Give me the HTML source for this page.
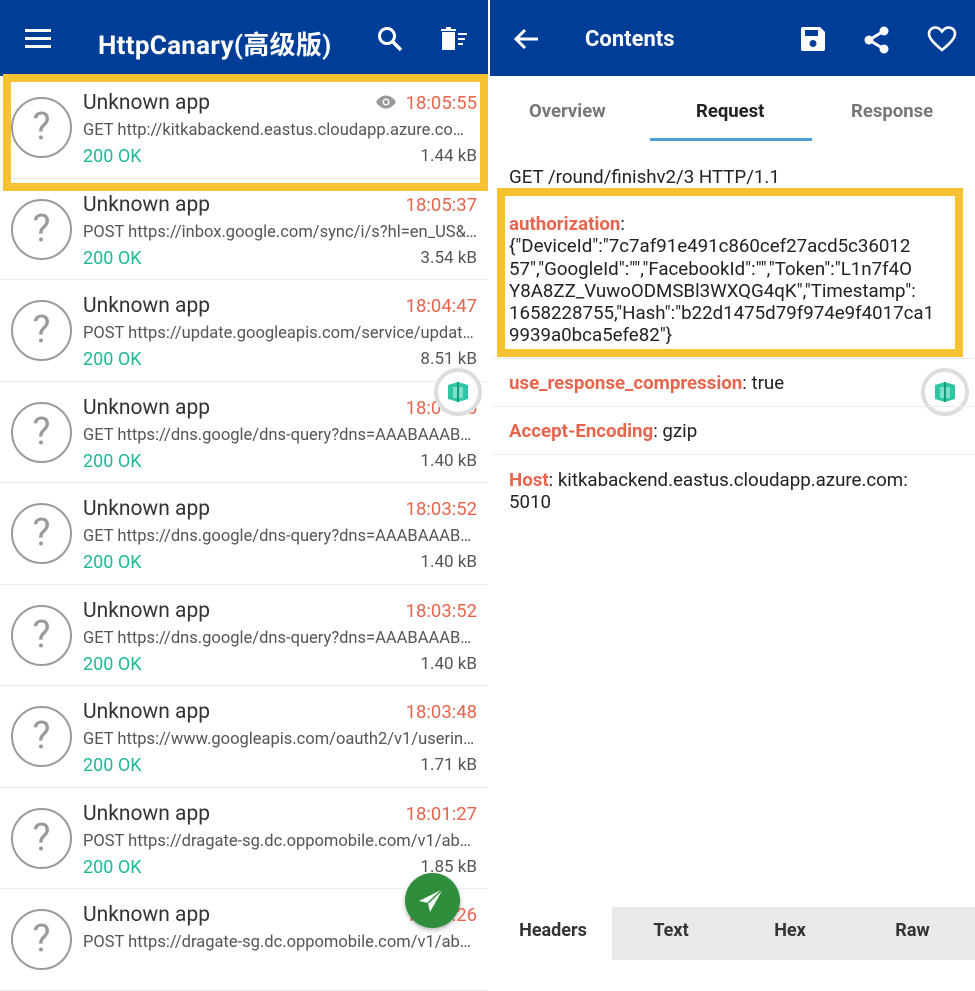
<!DOCTYPE html>
<html><head><meta charset="utf-8"><style>
*{margin:0;padding:0;box-sizing:border-box}
body{width:975px;height:960px;overflow:hidden;background:#fff;font-family:"Roboto","Liberation Sans","Noto Sans CJK SC",sans-serif;position:relative}
.abs{position:absolute}
.bar{position:absolute;top:0;height:76px;background:#003d96}
.row{position:absolute;left:0;width:488px;height:101.5px;border-bottom:1px solid #ececec}
.ic{position:absolute;left:11px;top:20px;width:61px;height:61px;border:2.5px solid #9a9a9a;border-radius:50%;color:#9a9a9a;font-size:38px;text-align:center;line-height:56px}
.nm{position:absolute;left:83px;top:14px;font-size:21px;color:#333}
.url{position:absolute;left:83px;top:44px;font-size:16.5px;color:#555;width:395px;white-space:nowrap;overflow:hidden;text-overflow:ellipsis}
.st{position:absolute;left:83px;top:69px;font-size:18px;color:#1fb898}
.tm{position:absolute;right:11px;top:15px;font-size:18.5px;color:#e8654d}
.sz{position:absolute;right:11px;top:69px;font-size:17px;color:#555}
.k{color:#e8654d;font-weight:bold}
.hd{position:absolute;left:509px;font-size:18.7px;color:#222;line-height:22.3px}
.sep{position:absolute;left:494px;right:0;height:1px;background:#ececec}
.tab{position:absolute;top:907px;height:53px;font-size:18px;font-weight:bold;color:#333;text-align:center;line-height:48px;background:#e9e9e9}
.float{position:absolute;width:48px;height:48px;border-radius:50%;background:#fff;border:4px solid #ddd}
</style></head><body>
<div class="bar" style="left:0;width:488px"></div>
<div class="bar" style="left:490px;width:485px"></div>
<div class="abs" style="left:25px;top:29px;width:26px;height:3px;background:#fff;box-shadow:0 8px 0 #fff,0 16px 0 #fff"></div>
<div class="abs" style="left:98px;top:25px;color:#fff;font-size:26px;font-weight:bold;letter-spacing:0.3px">HttpCanary(高级版)</div>
<svg class="abs" style="left:376px;top:25px" width="28" height="28" viewBox="0 0 28 28"><circle cx="11" cy="11" r="7.5" fill="none" stroke="#fff" stroke-width="3"/><path d="M16.5 16.5L25 25" stroke="#fff" stroke-width="3.5"/></svg>
<svg class="abs" style="left:440px;top:27px" width="30" height="24" viewBox="0 0 30 24"><rect x="2" y="5" width="13" height="18" fill="#fff"/><rect x="1" y="2" width="15" height="2" fill="#fff"/><rect x="6" y="0" width="5" height="2" fill="#fff"/><rect x="18" y="6" width="9" height="2" fill="#fff"/><rect x="18" y="11" width="7" height="2" fill="#fff"/><rect x="18" y="16" width="5" height="2" fill="#fff"/></svg>
<svg class="abs" style="left:512px;top:27px" width="28" height="24" viewBox="0 0 28 24"><path d="M26 12H4M13 3L4 12l9 9" fill="none" stroke="#fff" stroke-width="3"/></svg>
<div class="abs" style="left:585px;top:27px;color:#fff;font-size:22px;font-weight:bold">Contents</div>
<svg class="abs" style="left:799px;top:25px" width="28" height="28" viewBox="0 0 28 28"><path d="M2 4a2 2 0 0 1 2-2h17l5 5v17a2 2 0 0 1-2 2H4a2 2 0 0 1-2-2z" fill="#fff"/><rect x="6" y="5" width="13" height="6" fill="#003d96"/><circle cx="14" cy="18.5" r="3.5" fill="#003d96"/></svg>
<svg class="abs" style="left:862px;top:25px" width="30" height="30" viewBox="0 0 30 30"><path d="M22 6L7 15l15 9" fill="none" stroke="#fff" stroke-width="3"/><circle cx="22" cy="6" r="4.5" fill="#fff"/><circle cx="7" cy="15" r="4.5" fill="#fff"/><circle cx="22" cy="24" r="4.5" fill="#fff"/></svg>
<svg class="abs" style="left:927px;top:25px" width="30" height="28" viewBox="0 0 30 28"><path d="M15 25C4 16 2 12 2 8.5 2 5 5 2.5 8.5 2.5c3 0 5 2 6.5 4 1.5-2 3.5-4 6.5-4C25 2.5 28 5 28 8.5 28 12 26 16 15 25z" fill="none" stroke="#fff" stroke-width="2.6"/></svg>

<div class="row" style="top:77px"><div class="ic">?</div><div class="nm">Unknown app</div>
<svg class="abs" style="left:375px;top:18px" width="22" height="14" viewBox="0 0 22 14"><path d="M1 7C4 2 8 0.5 11 0.5S18 2 21 7c-3 5-7 6.5-10 6.5S4 12 1 7z" fill="#9a9a9a"/><circle cx="11" cy="7" r="3.5" fill="#fff"/><circle cx="11" cy="7" r="2" fill="#9a9a9a"/></svg>
<div class="tm">18:05:55</div><div class="url">GET http://kitkabackend.eastus.cloudapp.azure.com:5010/round</div><div class="st">200 OK</div><div class="sz">1.44 kB</div></div>
<div class="row" style="top:178.5px"><div class="ic">?</div><div class="nm">Unknown app</div><div class="tm">18:05:37</div><div class="url">POST https://inbox.google.com/sync/i/s?hl=en_US&amp;c=0</div><div class="st">200 OK</div><div class="sz">3.54 kB</div></div>
<div class="row" style="top:280px"><div class="ic">?</div><div class="nm">Unknown app</div><div class="tm">18:04:47</div><div class="url">POST https://update.googleapis.com/service/update2</div><div class="st">200 OK</div><div class="sz">8.51 kB</div></div>
<div class="row" style="top:381.5px"><div class="ic">?</div><div class="nm">Unknown app</div><div class="tm">18:04:15</div><div class="url">GET https://dns.google/dns-query?dns=AAABAAABAAAA</div><div class="st">200 OK</div><div class="sz">1.40 kB</div></div>
<div class="row" style="top:483px"><div class="ic">?</div><div class="nm">Unknown app</div><div class="tm">18:03:52</div><div class="url">GET https://dns.google/dns-query?dns=AAABAAABAAAA</div><div class="st">200 OK</div><div class="sz">1.40 kB</div></div>
<div class="row" style="top:584.5px"><div class="ic">?</div><div class="nm">Unknown app</div><div class="tm">18:03:52</div><div class="url">GET https://dns.google/dns-query?dns=AAABAAABAAAA</div><div class="st">200 OK</div><div class="sz">1.40 kB</div></div>
<div class="row" style="top:686px"><div class="ic">?</div><div class="nm">Unknown app</div><div class="tm">18:03:48</div><div class="url">GET https://www.googleapis.com/oauth2/v1/userinfo</div><div class="st">200 OK</div><div class="sz">1.71 kB</div></div>
<div class="row" style="top:787.5px"><div class="ic">?</div><div class="nm">Unknown app</div><div class="tm">18:01:27</div><div class="url">POST https://dragate-sg.dc.oppomobile.com/v1/abcdefgh</div><div class="st">200 OK</div><div class="sz">1.85 kB</div></div>
<div class="row" style="top:889px"><div class="ic">?</div><div class="nm">Unknown app</div><div class="tm">18:01:26</div><div class="url">POST https://dragate-sg.dc.oppomobile.com/v1/abcdefgh</div></div>

<div class="abs" style="left:3px;top:74px;width:485px;height:117px;border:8px solid #f5c232"></div>

<div class="float" style="left:434px;top:368px"></div>
<svg class="abs" style="left:446px;top:381px" width="24" height="22" viewBox="0 0 24 22"><path d="M2 4l10-3 10 3v14l-10 3-10-3z" fill="#2fc6a6"/><path d="M7 6h10v11H7z" fill="#7de0c8"/><path d="M12 1v20" stroke="#1a9a80" stroke-width="2"/></svg>
<div class="float" style="left:921px;top:368px"></div>
<svg class="abs" style="left:933px;top:381px" width="24" height="22" viewBox="0 0 24 22"><path d="M2 4l10-3 10 3v14l-10 3-10-3z" fill="#2fc6a6"/><path d="M7 6h10v11H7z" fill="#7de0c8"/><path d="M12 1v20" stroke="#1a9a80" stroke-width="2"/></svg>
<div class="abs" style="left:405px;top:873px;width:55px;height:55px;border-radius:50%;background:#2f8e3c;box-shadow:0 2px 5px rgba(0,0,0,.3)"></div>
<svg class="abs" style="left:416px;top:886px" width="30" height="30" viewBox="0 0 30 30"><path d="M27 3L3 15l9 2 2 9z" fill="#fff"/><path d="M12 17L27 3" stroke="#2f8e3c" stroke-width="1.5"/></svg>

<div class="abs" style="left:529px;top:100px;font-size:18.5px;font-weight:bold;color:#777">Overview</div>
<div class="abs" style="left:696px;top:100px;font-size:18.5px;font-weight:bold;color:#222">Request</div>
<div class="abs" style="left:851px;top:100px;font-size:18.5px;font-weight:bold;color:#777">Response</div>
<div class="abs" style="left:650px;top:138px;width:162px;height:3px;background:#4a9fd6"></div>

<div class="hd" style="top:166px">GET /round/finishv2/3 HTTP/1.1</div>
<div class="abs" style="left:497px;top:188px;width:466px;height:169px;border:8px solid #f5c232"></div>
<div class="hd" style="top:213px;width:450px;white-space:nowrap"><span class="k">authorization</span>:<br>{"DeviceId":"7c7af91e491c860cef27acd5c36012<br>57","GoogleId":"","FacebookId":"","Token":"L1n7f4O<br>Y8A8ZZ_VuwoODMSBl3WXQG4qK","Timestamp":<br>1658228755,"Hash":"b22d1475d79f974e9f4017ca1<br>9939a0bca5efe82"}</div>
<div class="sep" style="top:358px"></div>
<div class="hd" style="top:372px"><span class="k">use_response_compression</span>: true</div>
<div class="sep" style="top:406px"></div>
<div class="hd" style="top:420px"><span class="k">Accept-Encoding</span>: gzip</div>
<div class="sep" style="top:454px"></div>
<div class="hd" style="top:469px"><span class="k">Host</span>: kitkabackend.eastus.cloudapp.azure.com:<br>5010</div>

<div class="tab" style="left:494px;width:118px;background:#fff">Headers</div>
<div class="tab" style="left:612px;width:118px">Text</div>
<div class="tab" style="left:730px;width:120px">Hex</div>
<div class="tab" style="left:850px;width:125px">Raw</div>
</body></html>
